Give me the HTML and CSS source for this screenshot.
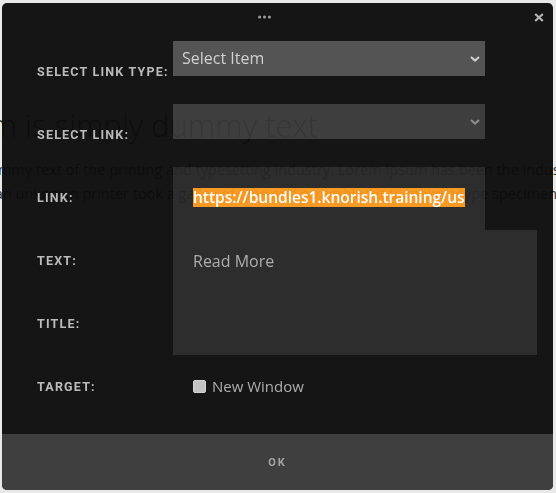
FILE: index.html
```html
<!DOCTYPE html>
<html lang="en">
<head>
    <meta charset="UTF-8">
    <meta name="viewport" content="width=device-width, initial-scale=1.0">
    <title>Insert Link</title>
    <link rel="stylesheet" href="styles.css">
</head>
<body>
<div class="page">
    <h1>Lorem Ipsum is simply dummy text</h1>
    <p class="page-line">Lorem Ipsum is simply dummy text of the printing and typesetting industry. Lorem Ipsum has been the industry's standard dummy text ever</p>
    <p class="page-line second">since the 1500s, when an unknown printer took a galley of type and scrambled it to make a type specimen book.</p>
</div>

<div class="modal">
    <div class="modal-head">
        <svg class="drag" width="13" height="4" viewBox="0 0 13 4">
            <circle cx="1.6" cy="2" r="1.5"/>
            <circle cx="6.5" cy="2" r="1.5"/>
            <circle cx="11.4" cy="2" r="1.5"/>
        </svg>
        <svg class="close" width="10" height="9" viewBox="0 0 10 9">
            <path d="M1.2 1 L8.8 8 M8.8 1 L1.2 8"/>
        </svg>
    </div>

    <div class="link-form">
        <label class="label">Select link type:</label>
        <div class="select">
            <span>Select Item</span>
            <svg width="10" height="6" viewBox="0 0 10 6"><path d="M1 1 L5 4.6 L9 1"/></svg>
        </div>

        <label class="label">Select link:</label>
        <div class="select empty">
            <span></span>
            <svg width="10" height="6" viewBox="0 0 10 6"><path d="M1 1 L5 4.6 L9 1"/></svg>
        </div>

        <label class="label">Link:</label>
        <div class="field link"><span class="selected">https://bundles1.knorish.training/us</span></div>

        <label class="label">Text:</label>
        <div class="field text">Read More</div>

        <label class="label">Title:</label>

        <label class="label">Target:</label>
        <div class="target">
            <span class="checkbox"></span>
            <span>New Window</span>
        </div>
    </div>

    <div class="modal-foot">OK</div>
</div>
</body>
</html>
```

FILE: styles.css
```css
body {
    margin: 0;
    background-color: #e9e9e9;
    font-family: "Open Sans", Arial, sans-serif;
    color: #333;
    overflow: hidden;
}
.page {
    padding-top: 105px;
}
.page h1 {
    margin: 0 0 13px -168px;
    font-size: 31px;
    font-weight: 300;
    line-height: 40px;
    white-space: nowrap;
}
.page-line {
    margin: 0 0 0 -175px;
    font-size: 14.5px;
    line-height: 24px;
    white-space: nowrap;
}
.page-line.second {
    margin-left: -158px;
}

/* dialog */
.modal {
    position: fixed;
    left: 2px;
    top: 3px;
    width: 551px;
    height: 487px;
    display: flex;
    flex-direction: column;
    background-color: #0c0c0c;
    border-radius: 5px;
    overflow: hidden;
    opacity: 0.955;
}
.modal-head {
    height: 38px;
    display: flex;
    align-items: flex-start;
    padding: 0 9px 0 256px;
    box-sizing: border-box;
}
.drag {
    fill: #9a9a9a;
    margin-top: 12px;
}
.close {
    margin-left: auto;
    margin-top: 10px;
    stroke: #b0b0b0;
    stroke-width: 2.3;
    fill: none;
}
.link-form {
    display: grid;
    grid-template-columns: 136px auto;
    grid-template-rows: repeat(6, 63px);
    align-items: start;
    padding-left: 35px;
}
.label {
    grid-column: 1;
    padding-top: 24px;
    font-family: Roboto, Arial, sans-serif;
    font-size: 12.5px;
    font-weight: bold;
    line-height: 14px;
    letter-spacing: 1.2px;
    text-transform: uppercase;
    color: #bababa;
    white-space: nowrap;
}
.select {
    grid-column: 2;
    width: 312px;
    height: 35px;
    box-sizing: border-box;
    display: flex;
    align-items: center;
    justify-content: space-between;
    padding: 0 5px 0 9px;
    background-color: #4e4e4e;
    font-size: 16px;
    font-weight: 500;
    line-height: 19px;
    color: #cfcfcf;
}
.select svg {
    stroke: #d0d0d0;
    stroke-width: 2;
    fill: none;
}
.select.empty {
    background-color: #373737;
}
.select.empty svg {
    stroke: #8a8a8a;
}
.field {
    grid-column: 2;
    box-sizing: border-box;
    padding: 21px 20px 0;
    background-color: #252525;
    font-size: 16px;
    font-weight: 500;
    line-height: 19px;
    color: #ababab;
}
.field.link {
    width: 312px;
    height: 63px;
}
.field.text {
    grid-row: span 2;
    width: 364px;
    height: 125px;
    padding-top: 22px;
}
.selected {
    display: inline-block;
    background-color: #f8971c;
    color: #fff;
    font-size: 15.5px;
    font-weight: 600;
}
.target {
    grid-column: 2;
    display: flex;
    align-items: center;
    gap: 6px;
    padding: 21px 0 0 20px;
    font-size: 15px;
    line-height: 19px;
    color: #ababab;
}
.checkbox {
    width: 11px;
    height: 11px;
    border: 1px solid #d4d4d4;
    border-radius: 2px;
    background-color: #c2c2c2;
}
.modal-foot {
    margin-top: auto;
    height: 56px;
    display: flex;
    align-items: center;
    justify-content: center;
    background-color: #383838;
    font-family: Roboto, Arial, sans-serif;
    font-size: 11px;
    font-weight: bold;
    letter-spacing: 2px;
    color: #a0a0a0;
}
```
